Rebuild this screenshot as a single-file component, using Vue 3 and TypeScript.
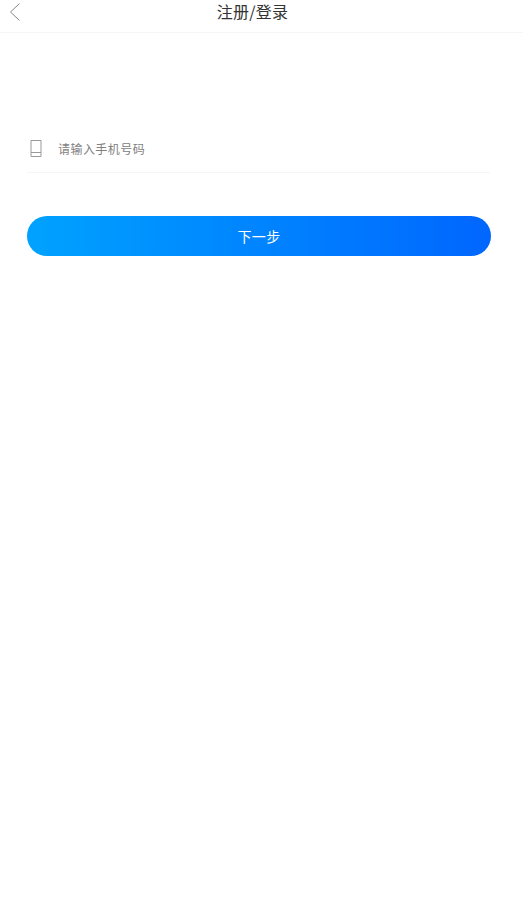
<script setup lang="ts">
import { ref } from "vue";

const phone = ref("");
</script>

<template>
  <div class="page">
    <header class="nav">
      <button class="back" type="button" aria-label="返回">
        <svg width="12" height="20" viewBox="0 0 12 20">
          <path d="M10.5 1.5 L1.5 10 L10.5 18.5" fill="none" stroke="#888" stroke-width="1" />
        </svg>
      </button>
      <h1 class="title">注册/登录</h1>
    </header>

    <main class="form">
      <label class="field">
        <svg class="phone-icon" width="12" height="17" viewBox="0 0 12 17">
          <path d="M1 .5 H11 V16.5 H1 Z M1 12.5 H11" fill="none" stroke="#999" stroke-width="1" />
        </svg>
        <input v-model="phone" class="input" type="tel" placeholder="请输入手机号码" />
      </label>
      <button class="next" type="button">下一步</button>
    </main>
  </div>
</template>

<style scoped>
.page {
  min-height: 912px;
  background: #fff;
  font-family: "Noto Sans CJK SC", "Liberation Sans", sans-serif;
}

.nav {
  position: relative;
  height: 32px;
  display: flex;
  align-items: center;
  justify-content: center;
  border-bottom: 1px solid #f5f5f5;
}

.back {
  position: absolute;
  left: 9px;
  top: 2px;
  padding: 0;
  border: 0;
  background: none;
  line-height: 0;
}

.title {
  margin: 0 18px 11px 0;
  font-size: 16px;
  font-weight: 400;
  color: #333;
  letter-spacing: 0.2px;
}

.form {
  padding: 92px 32px 0 27px;
}

.field {
  height: 47px;
  display: flex;
  align-items: center;
  gap: 16px;
  margin-right: 1px;
  padding-left: 3px;
  border-bottom: 1px solid #f5f5f5;
}

.phone-icon {
  flex: none;
}

.input {
  flex: 1;
  min-width: 0;
  padding: 0;
  border: 0;
  outline: 0;
  font: inherit;
  font-size: 12px;
  letter-spacing: 0.45px;
  color: #333;
}

.input::placeholder {
  color: #808080;
  opacity: 1;
}

.next {
  display: block;
  width: 100%;
  height: 40px;
  margin-top: 43px;
  border: 0;
  border-radius: 20px;
  background: linear-gradient(90deg, #00a2ff, #0066ff);
  color: #fff;
  font: inherit;
  font-size: 14px;
  letter-spacing: 0.4px;
}
</style>
